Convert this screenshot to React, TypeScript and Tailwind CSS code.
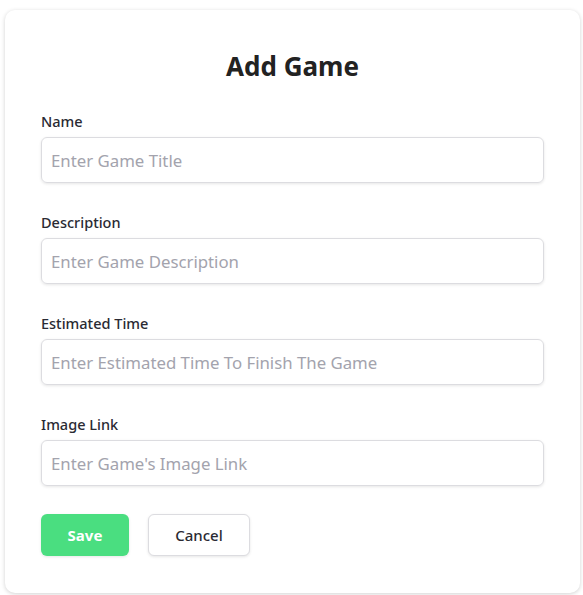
import React from "react";

const fields = [
  { label: "Name", placeholder: "Enter Game Title" },
  { label: "Description", placeholder: "Enter Game Description" },
  { label: "Estimated Time", placeholder: "Enter Estimated Time To Finish The Game" },
  { label: "Image Link", placeholder: "Enter Game's Image Link" },
];

export default function App() {
  return (
    <div className="min-h-screen bg-white pt-[10px] pl-[5px] font-['Noto_Sans',sans-serif]">
      <div className="w-[575px] rounded-[10px] bg-white px-[36px] pt-[38px] pb-[37px] shadow-[0_1px_4px_rgba(0,0,0,0.18)]">
        <h1 className="text-center text-[26px] font-bold leading-[36px] text-[#222]">Add Game</h1>
        <form className="mt-[27px] flex flex-col gap-[29px]">
          {fields.map((f) => (
            <div key={f.label} className="flex flex-col">
              <label className="text-[14.5px] font-medium leading-[20px] text-[#2a2a33]">{f.label}</label>
              <input
                type="text"
                placeholder={f.placeholder}
                className="mt-[6px] h-[46px] w-full rounded-[6px] border border-[#dcdce0] px-[9px] text-[16.8px] text-[#333] shadow-[0_1px_3px_rgba(0,0,0,0.1)] outline-none placeholder:text-[#a3a3ad]"
              />
            </div>
          ))}
          <div className="-mt-px flex gap-[19px]">
            <button
              type="button"
              className="h-[42px] w-[88px] rounded-[6px] bg-[#4ade80] text-[15px] font-bold text-white shadow-[0_1px_3px_rgba(0,0,0,0.1)]"
            >
              Save
            </button>
            <button
              type="button"
              className="h-[42px] w-[102px] rounded-[6px] border border-[#dcdce0] bg-white text-[15px] font-medium text-[#2a2a33] shadow-[0_1px_3px_rgba(0,0,0,0.1)]"
            >
              Cancel
            </button>
          </div>
        </form>
      </div>
    </div>
  );
}
